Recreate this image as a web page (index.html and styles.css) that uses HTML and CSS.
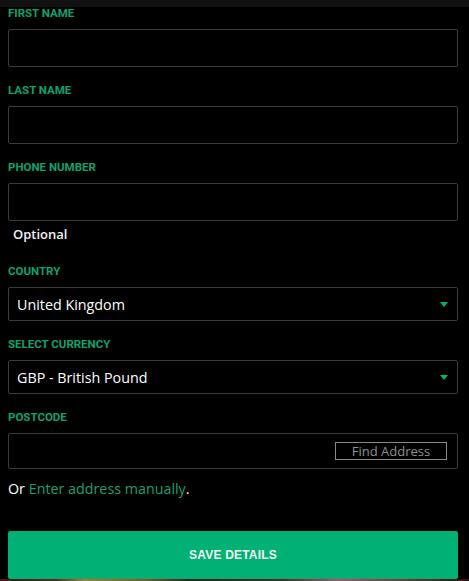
FILE: index.html
```html
<!DOCTYPE html>
<html lang="en">
<head>
<meta charset="utf-8">
<title>Details</title>
<link rel="stylesheet" href="styles.css">
</head>
<body>
<div class="topbar"></div>
<form class="form">
  <div class="field">
    <div class="label">FIRST NAME</div>
    <div class="input"></div>
  </div>
  <div class="field">
    <div class="label">LAST NAME</div>
    <div class="input"></div>
  </div>
  <div class="field field-phone">
    <div class="label">PHONE NUMBER</div>
    <div class="input"></div>
    <div class="hint">Optional</div>
  </div>
  <div class="field">
    <div class="label">COUNTRY</div>
    <div class="select"><span>United Kingdom</span><span class="caret"></span></div>
  </div>
  <div class="field">
    <div class="label">SELECT CURRENCY</div>
    <div class="select"><span>GBP - British Pound</span><span class="caret"></span></div>
  </div>
  <div class="field field-post">
    <div class="label">POSTCODE</div>
    <div class="input input-post"><span class="find">Find Address</span></div>
  </div>
  <p class="manual">Or <span class="link">Enter address manually</span>.</p>
  <div class="save">SAVE DETAILS</div>
</form>
<div class="strip"></div>
</body>
</html>
```
FILE: styles.css
```css
html, body {
  margin: 0;
  padding: 0;
  background: #000;
  overflow: hidden;
}
body {
  width: 469px;
  height: 581px;
  font-family: "Open Sans", sans-serif;
  color: #fff;
}
.topbar {
  height: 7px;
  background: #111;
}
.form {
  display: flex;
  flex-direction: column;
  padding: 0 11px 0 8px;
}
.field {
  display: flex;
  flex-direction: column;
  margin-bottom: 17px;
}
.label {
  font-family: Roboto, sans-serif;
  font-weight: 700;
  font-size: 11.5px;
  line-height: 13px;
  color: #0ea26e;
  margin-bottom: 9px;
}
.input {
  height: 36px;
  border: 1px solid #3c3c3c;
  border-radius: 2px;
}
.field-phone {
  margin-bottom: 22px;
}
.hint {
  font-size: 13px;
  font-weight: 600;
  line-height: 17px;
  margin-top: 5px;
  padding-left: 5px;
  color: #f2f2f2;
}
.select {
  height: 32px;
  border: 1px solid #3c3c3c;
  border-radius: 2px;
  display: flex;
  align-items: center;
  justify-content: space-between;
  padding: 0 9px 0 8px;
  font-size: 14.3px;
  color: #fff;
}
.caret {
  width: 0;
  height: 0;
  border-left: 4.5px solid transparent;
  border-right: 4.5px solid transparent;
  border-top: 5px solid #00b074;
}
.input-post {
  height: 34px;
  display: flex;
  align-items: center;
  justify-content: flex-end;
  padding-right: 10px;
}
.find {
  box-sizing: border-box;
  width: 112px;
  height: 18px;
  border: 1px solid #8a8a8a;
  color: #8f8f8f;
  font-size: 13px;
  line-height: 16px;
  text-align: center;
}
.field-post {
  margin-bottom: 10px;
}
.manual {
  margin: 0;
  font-size: 14.3px;
  line-height: 20px;
  color: #fff;
}
.link {
  color: #1aa070;
}
.save {
  margin-top: 32px;
  height: 48px;
  border-radius: 2px;
  background: #00b074;
  display: flex;
  align-items: center;
  justify-content: center;
  font-family: "Liberation Sans", Arial, sans-serif;
  font-weight: 700;
  font-size: 12px;
  letter-spacing: 0.2px;
  color: #f4f4f4;
}
.strip {
  height: 2px;
  margin-top: 0;
  background: linear-gradient(90deg, #3a1a12 0%, #5a2a1a 12%, #b07a2a 18%, #8a5a22 30%, #3a2418 40%, #4a2a22 60%, #b0506a 72%, #7a3a3a 85%, #2a1410 100%);
}
```
